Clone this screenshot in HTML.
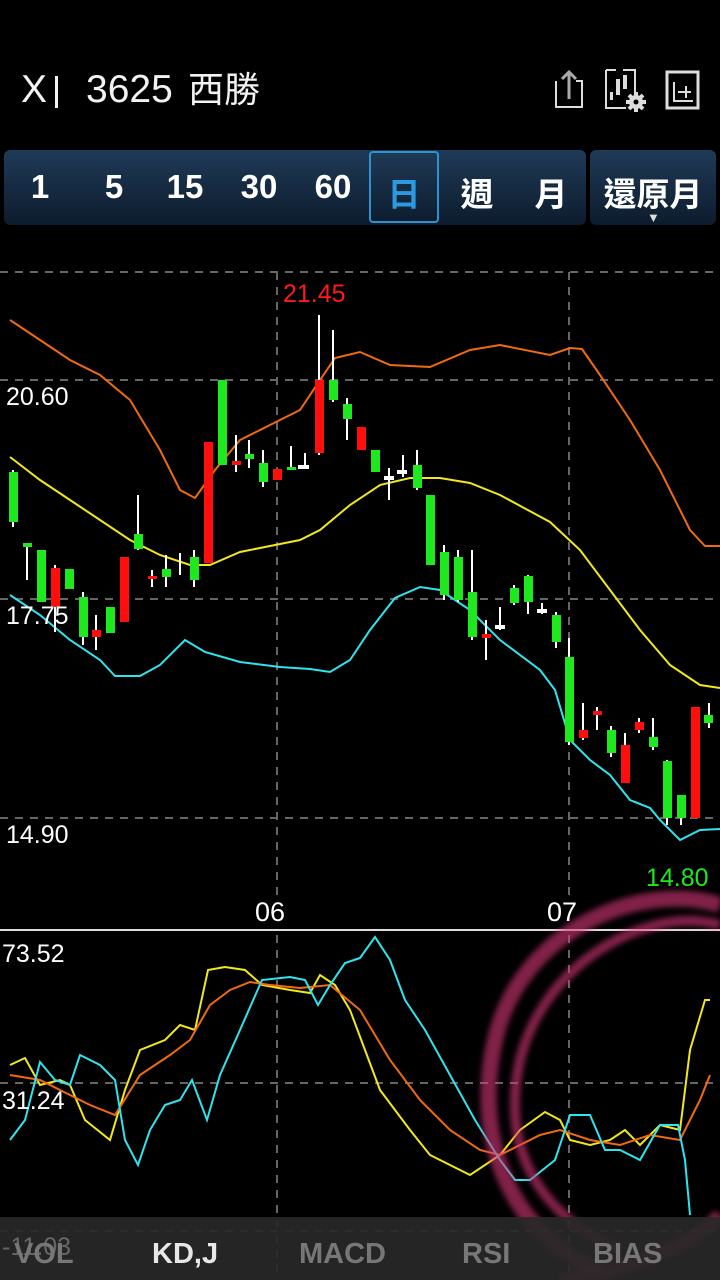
<!DOCTYPE html>
<html><head><meta charset="utf-8">
<style>
html,body{margin:0;padding:0;background:#000;width:720px;height:1280px;overflow:hidden;font-family:"Liberation Sans","Noto Sans CJK TC",sans-serif;}
.abs{position:absolute;}
.t{position:absolute;top:68px;color:#f2f2f2;font-size:39px;line-height:44px;}
.bar{left:4px;top:150px;width:582px;height:75px;border-radius:6px;background:linear-gradient(#1f3a57,#0d1c2d);}
.bar2{left:590px;top:150px;width:126px;height:75px;border-radius:6px;background:linear-gradient(#1f3a57,#0d1c2d);}
.tab{position:absolute;top:168px;color:#fff;font-size:33px;text-align:center;font-weight:bold;}
.sel{left:369px;top:151px;width:70px;height:72px;border:2px solid #2c92d2;border-radius:4px;box-sizing:border-box;}
.lbl{position:absolute;color:#fff;font-size:25px;}
.bot{left:0;top:1217px;width:720px;height:63px;background:rgba(40,40,40,0.92);}
.bt{position:absolute;top:1238px;font-size:29px;font-weight:bold;color:#777;}
</style></head><body>
<div class="t" style="left:21px">X</div>
<div class="abs" style="left:55px;top:76px;width:3px;height:32px;background:#f2f2f2"></div>
<div class="t" style="left:86px">3625</div>
<div class="t" style="left:188px;font-size:36px">西勝</div>
<svg class="abs" style="left:550px;top:65px" width="170" height="50" viewBox="0 0 170 50">
 <path d="M6 16 V42 H32 V16 H26" fill="none" stroke="#ddd" stroke-width="2"/>
 <path d="M19 34 V7 M12 14 L19 7 L26 14" fill="none" stroke="#aaa" stroke-width="3"/>
 <path d="M73 5 H85 V28 M56 5 H66 M56 5 V43 H76" fill="none" stroke="#ddd" stroke-width="2"/>
 <rect x="60" y="27" width="3" height="8" fill="#ddd"/><rect x="66" y="14" width="4" height="16" fill="#ddd"/><rect x="73" y="10" width="4" height="14" fill="#ddd"/>
 <g stroke="#ddd" stroke-width="4"><line x1="86" y1="27" x2="86" y2="47"/><line x1="76" y1="37" x2="96" y2="37"/><line x1="79" y1="30" x2="93" y2="44"/><line x1="93" y1="30" x2="79" y2="44"/></g>
 <circle cx="86" cy="37" r="7" fill="#ddd"/><circle cx="86" cy="37" r="2.5" fill="#000"/>
 <rect x="117" y="7" width="31" height="36" fill="none" stroke="#ddd" stroke-width="3"/>
 <path d="M124 17 V36 H143 M128 27 H141 M136 21 V33" fill="none" stroke="#ddd" stroke-width="2"/>
</svg>
<div class="abs bar"></div><div class="abs bar2"></div>
<div class="abs sel"></div>
<div class="tab" style="left:28px;width:24px">1</div>
<div class="tab" style="left:100px;width:28px">5</div>
<div class="tab" style="left:162px;width:46px">15</div>
<div class="tab" style="left:236px;width:46px">30</div>
<div class="tab" style="left:310px;width:46px">60</div>
<div class="tab" style="left:380px;width:48px;color:#2a9be0">日</div>
<div class="tab" style="left:454px;width:46px">週</div>
<div class="tab" style="left:528px;width:46px">月</div>
<div class="tab" style="left:600px;width:106px">還原月</div>
<div class="abs" style="left:647px;top:210px;color:#ddd;font-size:13px">▼</div>

<svg class="abs" style="left:0;top:0" width="720" height="1280">
 <g stroke="#666" stroke-width="2" stroke-dasharray="8,7">
  <line x1="0" y1="272" x2="720" y2="272"/><line x1="0" y1="380" x2="720" y2="380"/>
  <line x1="0" y1="599" x2="720" y2="599"/><line x1="0" y1="818" x2="720" y2="818"/>
  <line x1="0" y1="1083" x2="720" y2="1083"/><line x1="0" y1="1231" x2="720" y2="1231"/>
  <line x1="277" y1="272" x2="277" y2="900"/><line x1="569" y1="272" x2="569" y2="900"/>
  <line x1="277" y1="935" x2="277" y2="1280"/><line x1="569" y1="935" x2="569" y2="1280"/>
 </g>
 <line x1="0" y1="930" x2="720" y2="930" stroke="#ddd" stroke-width="2"/>
 <polyline fill="none" stroke="#f06a10" stroke-width="2" points="10,320 40,340 70,360 100,375 130,400 160,450 180,490 195,498 215,470 240,440 270,425 300,410 320,380 335,358 360,352 390,365 430,367 470,350 500,345 550,355 570,348 582,349 600,375 630,420 660,470 690,530 705,546 720,546"/>
 <polyline fill="none" stroke="#f2e81a" stroke-width="2" points="10,457 40,480 70,500 100,520 130,540 160,555 190,565 210,565 240,552 270,546 300,540 320,530 350,505 380,485 410,478 440,478 470,483 500,495 550,522 580,550 610,590 640,630 670,665 700,685 720,688"/>
 <polyline fill="none" stroke="#2ee4ef" stroke-width="2" points="10,595 40,615 70,640 100,660 115,676 140,676 160,665 185,640 205,652 240,662 280,667 310,669 330,672 350,660 370,630 395,598 420,587 440,590 470,610 500,640 540,670 555,690 570,740 590,760 610,775 630,800 650,808 660,820 680,840 700,830 720,829"/>
 <g stroke="#fff" stroke-width="2">
  <line x1="13" y1="470" x2="13" y2="527"/><line x1="27" y1="543" x2="27" y2="580"/><line x1="55" y1="565" x2="55" y2="632"/>
  <line x1="83" y1="592" x2="83" y2="645"/><line x1="96" y1="615" x2="96" y2="650"/><line x1="138" y1="495" x2="138" y2="550"/>
  <line x1="152" y1="570" x2="152" y2="587"/><line x1="166" y1="555" x2="166" y2="587"/><line x1="180" y1="553" x2="180" y2="575"/>
  <line x1="194" y1="550" x2="194" y2="587"/><line x1="236" y1="435" x2="236" y2="472"/><line x1="249" y1="440" x2="249" y2="468"/>
  <line x1="263" y1="450" x2="263" y2="487"/><line x1="291" y1="446" x2="291" y2="470"/><line x1="305" y1="453" x2="305" y2="468"/>
  <line x1="319" y1="315" x2="319" y2="455"/><line x1="333" y1="330" x2="333" y2="402"/><line x1="347" y1="398" x2="347" y2="440"/>
  <line x1="389" y1="468" x2="389" y2="500"/><line x1="403" y1="455" x2="403" y2="477"/><line x1="417" y1="450" x2="417" y2="490"/>
  <line x1="444" y1="545" x2="444" y2="600"/><line x1="458" y1="550" x2="458" y2="602"/><line x1="472" y1="550" x2="472" y2="640"/>
  <line x1="486" y1="620" x2="486" y2="660"/><line x1="500" y1="607" x2="500" y2="630"/><line x1="514" y1="585" x2="514" y2="605"/>
  <line x1="528" y1="575" x2="528" y2="614"/><line x1="542" y1="603" x2="542" y2="614"/><line x1="556" y1="612" x2="556" y2="648"/>
  <line x1="569" y1="638" x2="569" y2="745"/><line x1="583" y1="703" x2="583" y2="740"/><line x1="597" y1="707" x2="597" y2="730"/>
  <line x1="611" y1="726" x2="611" y2="757"/><line x1="625" y1="733" x2="625" y2="783"/><line x1="639" y1="718" x2="639" y2="733"/>
  <line x1="653" y1="718" x2="653" y2="750"/><line x1="667" y1="760" x2="667" y2="825"/><line x1="681" y1="795" x2="681" y2="825"/>
  <line x1="709" y1="703" x2="709" y2="728"/>
 </g>
 <g fill="#1ee81e">
  <rect x="9" y="472" width="9" height="50"/><rect x="23" y="543" width="9" height="4"/><rect x="37" y="550" width="9" height="52"/><rect x="65" y="569" width="9" height="20"/>
  <rect x="79" y="597" width="9" height="40"/><rect x="106" y="607" width="9" height="26"/><rect x="134" y="534" width="9" height="15"/>
  <rect x="162" y="569" width="9" height="8"/><rect x="190" y="557" width="9" height="23"/><rect x="218" y="380" width="9" height="85"/>
  <rect x="245" y="454" width="9" height="5"/><rect x="259" y="463" width="9" height="19"/><rect x="287" y="467" width="9" height="3"/><rect x="329" y="380" width="9" height="20"/>
  <rect x="343" y="404" width="9" height="15"/><rect x="371" y="450" width="9" height="22"/><rect x="413" y="465" width="9" height="23"/><rect x="426" y="495" width="9" height="70"/>
  <rect x="440" y="552" width="9" height="43"/><rect x="454" y="557" width="9" height="43"/><rect x="468" y="592" width="9" height="45"/>
  <rect x="510" y="588" width="9" height="15"/><rect x="524" y="576" width="9" height="26"/><rect x="552" y="615" width="9" height="27"/>
  <rect x="565" y="657" width="9" height="85"/><rect x="607" y="730" width="9" height="23"/><rect x="649" y="737" width="9" height="10"/>
  <rect x="663" y="761" width="9" height="57"/><rect x="677" y="795" width="9" height="23"/><rect x="704" y="715" width="9" height="8"/>
 </g>
 <g fill="#ff0e0e">
  <rect x="51" y="568" width="9" height="39"/><rect x="92" y="630" width="9" height="7"/><rect x="120" y="557" width="9" height="65"/>
  <rect x="148" y="576" width="9" height="3"/><rect x="204" y="442" width="9" height="121"/><rect x="232" y="461" width="9" height="4"/>
  <rect x="273" y="469" width="9" height="11"/><rect x="315" y="380" width="9" height="73"/><rect x="357" y="427" width="9" height="23"/>
  <rect x="482" y="634" width="9" height="4"/><rect x="579" y="730" width="9" height="8"/><rect x="593" y="711" width="9" height="4"/>
  <rect x="621" y="745" width="9" height="38"/><rect x="635" y="722" width="9" height="8"/><rect x="691" y="707" width="9" height="111"/>
 </g>
 <g fill="#fff"><rect x="298" y="465" width="11" height="4"/><rect x="384" y="476" width="10" height="4"/><rect x="397" y="470" width="10" height="4"/><rect x="495" y="625" width="10" height="4"/><rect x="537" y="609" width="10" height="4"/></g>

 <polyline fill="none" stroke="#f2e81a" stroke-width="2" points="10,1065 25,1058 40,1085 60,1080 70,1085 85,1120 110,1140 125,1090 140,1050 165,1040 180,1025 195,1030 208,970 225,967 245,970 262,985 290,990 310,993 320,975 335,985 350,1010 365,1050 380,1090 410,1130 430,1155 470,1175 500,1155 520,1130 545,1112 560,1120 570,1140 590,1145 610,1140 625,1130 640,1145 660,1125 680,1130 690,1050 705,1000 710,1000"/>
 <polyline fill="none" stroke="#f06a10" stroke-width="2" points="10,1075 40,1080 60,1090 90,1105 115,1115 140,1075 170,1055 190,1040 210,1005 230,990 250,982 270,985 300,988 330,985 360,1010 390,1060 420,1100 450,1130 480,1150 500,1155 520,1145 540,1135 560,1130 590,1140 620,1145 650,1135 680,1140 700,1100 710,1075"/>
 <polyline fill="none" stroke="#2ee4ef" stroke-width="2" points="10,1140 25,1120 40,1062 55,1080 70,1085 80,1055 100,1065 115,1080 125,1140 138,1165 150,1130 165,1105 180,1100 192,1080 207,1120 220,1075 240,1030 262,980 290,977 305,980 318,1005 330,985 345,963 360,958 375,937 390,960 405,1000 425,1030 450,1075 475,1120 500,1160 515,1180 530,1180 555,1160 570,1115 590,1115 605,1150 620,1150 640,1160 660,1125 678,1125 685,1160 690,1215"/>
 <g fill="none" stroke="rgba(215,55,120,0.6)" style="filter:blur(3px)">
  <path d="M720 905 C640 880 520 930 495 1040 C470 1150 520 1240 600 1270" stroke-width="16"/>
  <path d="M720 925 C650 905 545 960 520 1060 C500 1150 540 1215 620 1250" stroke-width="10"/>
  <path d="M560 1280 C640 1270 700 1240 720 1215" stroke-width="14"/>
 </g>
</svg>

<div class="lbl" style="left:283px;top:280px;color:#ff1a1a">21.45</div>
<div class="lbl" style="left:6px;top:383px">20.60</div>
<div class="lbl" style="left:6px;top:602px">17.75</div>
<div class="lbl" style="left:6px;top:821px">14.90</div>
<div class="lbl" style="left:646px;top:864px;color:#1ee81e">14.80</div>
<div class="lbl" style="left:255px;top:897px;font-size:27px">06</div>
<div class="lbl" style="left:547px;top:897px;font-size:27px">07</div>
<div class="lbl" style="left:2px;top:940px">73.52</div>
<div class="lbl" style="left:2px;top:1087px">31.24</div>
<div class="abs bot"></div>
<div class="lbl" style="left:2px;top:1233px;color:#666">-11.03</div>
<div class="bt" style="left:14px">VOL</div>
<div class="bt" style="left:152px;color:#e8e8e8">KD,J</div>
<div class="bt" style="left:299px">MACD</div>
<div class="bt" style="left:462px">RSI</div>
<div class="bt" style="left:593px">BIAS</div>
</body></html>
